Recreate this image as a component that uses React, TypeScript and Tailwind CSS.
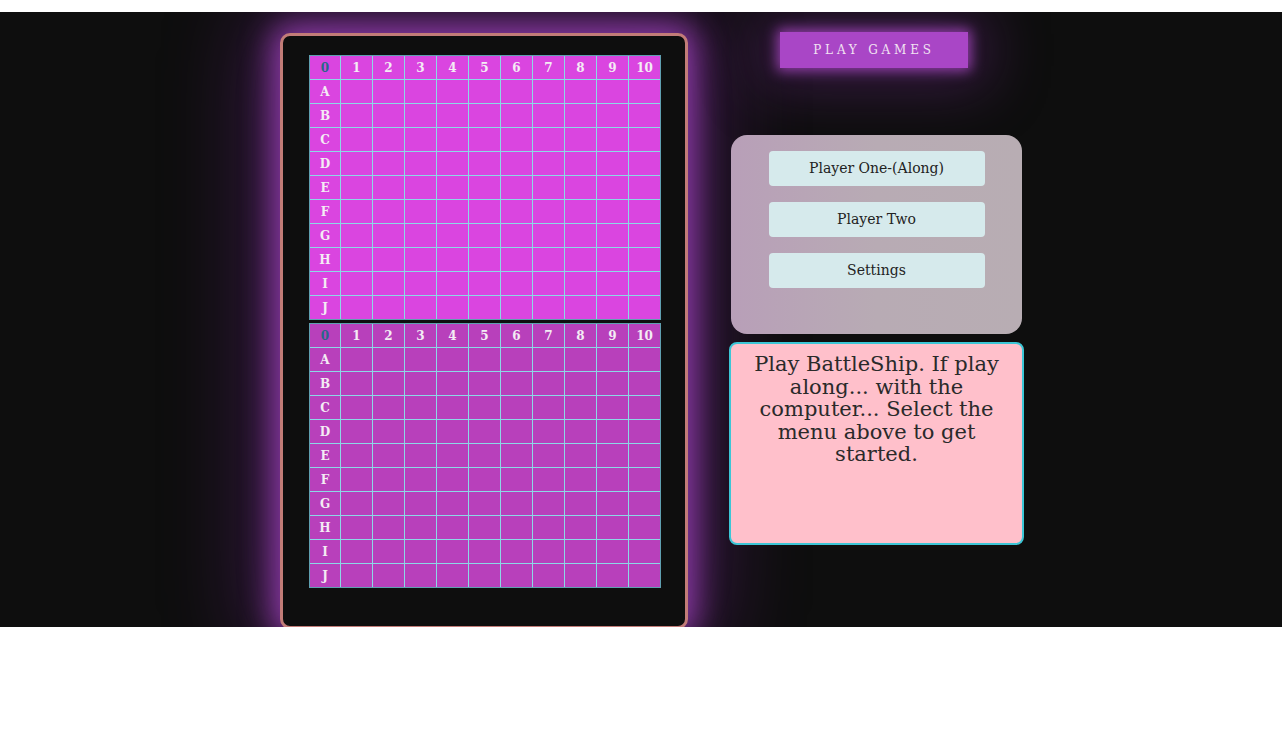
const COLS = ["0", "1", "2", "3", "4", "5", "6", "7", "8", "9", "10"];
const ROWS = ["A", "B", "C", "D", "E", "F", "G", "H", "I", "J"];

function Board({ cellBg }: { cellBg: string }) {
  return (
    <div className="grid w-fit grid-cols-[30px_repeat(10,31px)] gap-px border border-[#5f9fb0] bg-[#8cd8e6]">
      {COLS.map((c) => (
        <div
          key={"h" + c}
          className={`flex h-[23px] items-center justify-center text-[12px] font-bold ${cellBg} ${
            c === "0" ? "text-[#2a6688]" : "text-[#f4ecf4]"
          }`}
        >
          {c}
        </div>
      ))}
      {ROWS.map((r) => (
        <>
          <div
            key={r}
            className={`flex h-[23px] items-center justify-center text-[12px] font-bold text-[#f4ecf4] ${cellBg}`}
          >
            {r}
          </div>
          {COLS.slice(1).map((c) => (
            <div key={r + c} className={`h-[23px] ${cellBg}`} />
          ))}
        </>
      ))}
    </div>
  );
}

export default function App() {
  return (
    <div className="min-h-[746px] bg-white pt-3 font-['DejaVu_Serif',serif]">
      <section className="flex h-[615px] gap-[41px] overflow-hidden bg-[#0e0e0e] pl-[280px]">
        <div className="mt-[21px] h-[596px] w-[408px] shrink-0 rounded-[10px] border-[3px] border-[#c27c78] bg-[#0e0e0e] pl-[26px] pt-[19px] shadow-[0_0_30px_8px_rgba(170,70,200,0.75),0_0_90px_25px_rgba(120,40,150,0.45)]">
          <div className="flex flex-col gap-[3px]">
            <Board cellBg="bg-[#da45e0]" />
            <Board cellBg="bg-[#b840bb]" />
          </div>
        </div>

        <div className="flex w-[295px] shrink-0 flex-col">
          <button className="ml-[51px] mt-[20px] h-[36px] w-[188px] bg-[#a946c6] text-[12px] tracking-[3.8px] text-[#f1e2f2] shadow-[0_0_12px_3px_rgba(190,80,220,0.7),0_0_60px_20px_rgba(130,50,160,0.35)]">
            PLAY GAMES
          </button>

          <div className="mx-[2px] mt-[67px] flex h-[199px] flex-col items-center gap-4 rounded-[16px] bg-gradient-to-r from-[#b89fb8] via-[#b8abb4] to-[#b8adb3] pt-4">
            {["Player One-(Along)", "Player Two", "Settings"].map((t) => (
              <button
                key={t}
                className="h-[35px] w-[216px] rounded-[4px] bg-[#d6eaec] text-[14px] text-[#222]"
              >
                {t}
              </button>
            ))}
          </div>

          <div className="mt-2 h-[203px] rounded-[8px] border-2 border-[#3cc6d6] bg-[#ffc0cb] px-[18px] pt-[9px] text-center text-[21px] leading-[22.5px] text-[#2a2a2a]">
            Play BattleShip. If play along... with the computer... Select the menu above to get started.
          </div>
        </div>
      </section>
    </div>
  );
}
